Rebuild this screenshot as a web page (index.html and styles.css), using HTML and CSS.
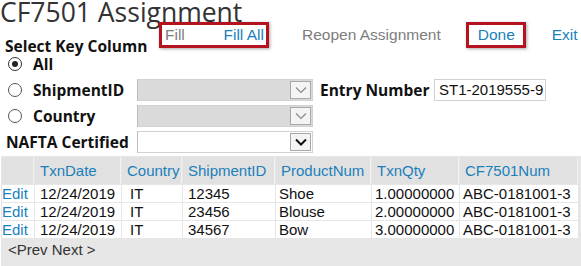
FILE: index.html
```html
<!DOCTYPE html>
<html lang="en">
<head>
  <meta charset="UTF-8">
  <title>CF7501 Assignment</title>
  <link rel="stylesheet" href="styles.css">
</head>
<body>
  <h1 class="title">CF7501 Assignment</h1>

  <div class="topbar">
    <div class="section-label">Select Key Column</div>
    <div class="actions">
      <div class="hl-box fill-box">
        <a href="#" class="act muted">Fill</a>
        <a href="#" class="act">Fill All</a>
      </div>
      <a href="#" class="act muted reopen">Reopen Assignment</a>
      <div class="hl-box done-box">
        <a href="#" class="act">Done</a>
      </div>
      <a href="#" class="act exit">Exit</a>
    </div>
  </div>

  <div class="keys">
    <label class="opt first"><span class="radio checked"></span>All</label>
    <div></div><div></div><div></div><div></div>

    <label class="opt"><span class="radio"></span>ShipmentID</label>
    <div class="select disabled"><span class="arrow"><svg width="12" height="8" viewBox="0 0 12 8"><path d="M1 1.5 6 6.5 11 1.5" fill="none" stroke="#8a8a8a" stroke-width="1.2"/></svg></span></div>
    <div class="field-label">Entry Number</div>
    <div class="input">ST1-2019555-9</div>
    <div></div>

    <label class="opt"><span class="radio"></span>Country</label>
    <div class="select disabled"><span class="arrow"><svg width="12" height="8" viewBox="0 0 12 8"><path d="M1 1.5 6 6.5 11 1.5" fill="none" stroke="#8a8a8a" stroke-width="1.2"/></svg></span></div>
    <div></div><div></div><div></div>

    <div class="field-label nafta">NAFTA Certified</div>
    <div class="select"><span class="arrow"><svg width="12" height="8" viewBox="0 0 12 8"><path d="M1 1.5 6 6.5 11 1.5" fill="none" stroke="#111" stroke-width="2"/></svg></span></div>
  </div>

  <div class="grid-wrap">
    <table class="grid">
      <colgroup>
        <col style="width:32px">
        <col style="width:86px">
        <col style="width:60px">
        <col style="width:92px">
        <col style="width:95px">
        <col style="width:87px">
        <col style="width:118px">
      </colgroup>
      <thead>
        <tr>
          <th></th>
          <th>TxnDate</th>
          <th>Country</th>
          <th>ShipmentID</th>
          <th>ProductNum</th>
          <th>TxnQty</th>
          <th>CF7501Num</th>
        </tr>
      </thead>
      <tbody>
        <tr>
          <td class="edit"><a href="#">Edit</a></td>
          <td class="date">12/24/2019</td>
          <td class="country">IT</td>
          <td class="ship">12345</td>
          <td>Shoe</td>
          <td>1.00000000</td>
          <td>ABC-0181001-3</td>
        </tr>
        <tr>
          <td class="edit"><a href="#">Edit</a></td>
          <td class="date">12/24/2019</td>
          <td class="country">IT</td>
          <td class="ship">23456</td>
          <td>Blouse</td>
          <td>2.00000000</td>
          <td>ABC-0181001-3</td>
        </tr>
        <tr>
          <td class="edit"><a href="#">Edit</a></td>
          <td class="date">12/24/2019</td>
          <td class="country">IT</td>
          <td class="ship">34567</td>
          <td>Bow</td>
          <td>3.00000000</td>
          <td>ABC-0181001-3</td>
        </tr>
      </tbody>
    </table>
    <div class="pager">&lt;Prev Next &gt;</div>
  </div>
</body>
</html>
```

FILE: styles.css
```css
body {
  margin: 0;
  background-color: #fff;
  font-family: 'Liberation Sans', Arial, sans-serif;
  color: #111;
  overflow: hidden;
}

.title {
  margin: 0;
  height: 22px;
  line-height: 24px;
  font-family: 'Open Sans', sans-serif;
  font-size: 26.5px;
  font-weight: 400;
  color: #333;
  white-space: nowrap;
}

/* label + action links */
.topbar {
  display: flex;
  align-items: flex-start;
}

.section-label {
  flex-shrink: 0;
  box-sizing: border-box;
  width: 159px;
  padding-left: 5px;
  margin-top: 13px;
  line-height: 22px;
  font-family: 'Open Sans', sans-serif;
  font-size: 15.5px;
  font-weight: 700;
  color: #111;
  white-space: nowrap;
}

.actions {
  display: flex;
  align-items: center;
  flex-shrink: 0;
}

.act {
  font-size: 15.5px;
  color: #1b7fbb;
  text-decoration: none;
  white-space: nowrap;
}

.act.muted {
  color: #7d7d7d;
}

.hl-box {
  flex-shrink: 0;
  box-sizing: border-box;
  height: 26px;
  border: 3px solid #b5121f;
  box-shadow: 1px 1px 3px rgba(0, 0, 0, 0.35);
  display: flex;
  align-items: center;
}

.fill-box {
  width: 110px;
  padding: 0 2px 0 3px;
  justify-content: space-between;
}

.reopen {
  margin-left: 33px;
}

.done-box {
  width: 60px;
  margin-left: 25px;
  padding-left: 9px;
}

.exit {
  margin-left: 26px;
}

/* key column options */
.keys {
  display: grid;
  grid-template-columns: 124px 176px 107px 112px 1fr;
  grid-template-rows: 18px 22px 22px 22px;
  column-gap: 7px;
  row-gap: 4px;
  padding-left: 6px;
}

.opt {
  display: flex;
  align-items: center;
  gap: 11px;
  padding-left: 2px;
  font-family: 'Open Sans', sans-serif;
  font-size: 15.5px;
  font-weight: 700;
  color: #111;
  white-space: nowrap;
}

.opt.first {
  height: 14px;
}

.radio {
  box-sizing: border-box;
  width: 14px;
  height: 14px;
  border: 1px solid #555;
  border-radius: 50%;
  background: #fff;
  display: flex;
  align-items: center;
  justify-content: center;
  flex-shrink: 0;
}

.radio.checked {
  border-color: #333;
}

.radio.checked::after {
  content: "";
  width: 6px;
  height: 6px;
  border-radius: 50%;
  background: #222;
}

.field-label {
  display: flex;
  align-items: center;
  font-family: 'Open Sans', sans-serif;
  font-size: 15.5px;
  font-weight: 700;
  color: #111;
  white-space: nowrap;
}

.select {
  box-sizing: border-box;
  height: 22px;
  border: 1px solid #d2d2d2;
  border-left-color: #bdbdbd;
  background: #fff;
  display: flex;
  justify-content: flex-end;
  align-items: center;
  padding-right: 1px;
}

.select.disabled {
  background: #dadada;
}

.arrow {
  box-sizing: border-box;
  width: 21px;
  height: 18px;
  border: 1px solid #a8a8a8;
  background: #f4f4f4;
  display: flex;
  align-items: center;
  justify-content: center;
}

.input {
  box-sizing: border-box;
  height: 22px;
  border: 1px solid #d0d0d0;
  padding-left: 4px;
  font-size: 15px;
  line-height: 20px;
  color: #111;
  white-space: nowrap;
}

/* result grid */
.grid-wrap {
  margin: 3px 0 0 1px;
  height: 110px;
  background-color: #e6e6e6;
}

.grid {
  width: 578px;
  table-layout: fixed;
  border-collapse: separate;
  border-spacing: 1px;
  font-size: 15px;
}

.grid th {
  height: 27px;
  padding: 0 5px;
  text-align: left;
  font-weight: 400;
  color: #1b7fbb;
  background-color: #e1e1e1;
  border-right: 1px solid #f1f1f1;
  white-space: nowrap;
  overflow: hidden;
}

.grid td {
  height: 17px;
  padding: 0 3px;
  line-height: 17px;
  background-color: #fff;
  color: #111;
  white-space: nowrap;
  overflow: hidden;
}

.grid td.edit {
  padding-left: 0;
}

.grid td.edit a {
  color: #1b7fbb;
  text-decoration: none;
}

.grid td.date,
.grid td.ship {
  padding-left: 5px;
}

.grid td.country {
  padding-left: 8px;
}

.pager {
  padding: 1px 7px;
  line-height: 20px;
  font-size: 15px;
  color: #333;
}
```
